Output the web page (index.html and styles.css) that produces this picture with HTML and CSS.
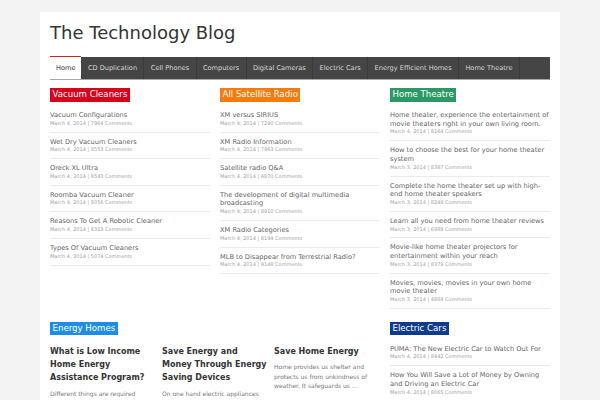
FILE: index.html
```html
<!DOCTYPE html>
<html>
<head>
<meta charset="utf-8">
<link rel="stylesheet" href="styles.css">
</head>
<body>
<div class="page">
  <h1 class="site-title">The Technology Blog</h1>
  <nav class="nav">
    <a class="nav-item active">Home</a>
    <a class="nav-item">CD Duplication</a>
    <a class="nav-item">Cell Phones</a>
    <a class="nav-item">Computers</a>
    <a class="nav-item">Digital Cameras</a>
    <a class="nav-item">Electric Cars</a>
    <a class="nav-item">Energy Efficient Homes</a>
    <a class="nav-item">Home Theatre</a>
  </nav>
  <main class="main">
    <section class="col">
      <h2 class="label red">Vacuum Cleaners</h2>
      <ul class="list">
        <li class="item"><div class="t">Vacuum Configurations</div><div class="m">March 4, 2014 | 7964 Comments</div></li>
        <li class="item"><div class="t">Wet Dry Vacuum Cleaners</div><div class="m">March 4, 2014 | 8553 Comments</div></li>
        <li class="item"><div class="t">Oreck XL Ultra</div><div class="m">March 4, 2014 | 8543 Comments</div></li>
        <li class="item"><div class="t">Roomba Vacuum Cleaner</div><div class="m">March 4, 2014 | 8056 Comments</div></li>
        <li class="item"><div class="t">Reasons To Get A Robotic Cleaner</div><div class="m">March 4, 2014 | 8313 Comments</div></li>
        <li class="item"><div class="t">Types Of Vacuum Cleaners</div><div class="m">March 4, 2014 | 5074 Comments</div></li>
      </ul>
    </section>
    <section class="col">
      <h2 class="label orange">All Satellite Radio</h2>
      <ul class="list">
        <li class="item"><div class="t">XM versus SIRIUS</div><div class="m">March 4, 2014 | 7290 Comments</div></li>
        <li class="item"><div class="t">XM Radio Information</div><div class="m">March 4, 2014 | 7963 Comments</div></li>
        <li class="item"><div class="t">Satellite radio Q&amp;A</div><div class="m">March 4, 2014 | 4870 Comments</div></li>
        <li class="item"><div class="t">The development of digital multimedia broadcasting</div><div class="m">March 4, 2014 | 8910 Comments</div></li>
        <li class="item"><div class="t">XM Radio Categories</div><div class="m">March 4, 2014 | 8194 Comments</div></li>
        <li class="item"><div class="t">MLB to Disappear from Terrestrial Radio?</div><div class="m">March 4, 2014 | 9148 Comments</div></li>
      </ul>
    </section>
    <section class="col">
      <h2 class="label green">Home Theatre</h2>
      <ul class="list">
        <li class="item"><div class="t">Home theater, experience the entertainment of movie theaters right in your own living room.</div><div class="m">March 4, 2014 | 8164 Comments</div></li>
        <li class="item"><div class="t">How to choose the best for your home theater system</div><div class="m">March 3, 2014 | 8387 Comments</div></li>
        <li class="item"><div class="t">Complete the home theater set up with high-end home theater speakers</div><div class="m">March 3, 2014 | 8249 Comments</div></li>
        <li class="item"><div class="t">Learn all you need from home theater reviews</div><div class="m">March 3, 2014 | 6989 Comments</div></li>
        <li class="item"><div class="t">Movie-like home theater projectors for entertainment within your reach</div><div class="m">March 3, 2014 | 8379 Comments</div></li>
        <li class="item"><div class="t">Movies, movies, movies in your own home movie theater</div><div class="m">March 3, 2014 | 4869 Comments</div></li>
      </ul>
    </section>
    <section class="col wide">
      <h2 class="label blue">Energy Homes</h2>
      <div class="posts">
        <article class="post">
          <h3 class="pt">What is Low Income Home Energy Assistance Program?</h3>
          <p class="px">Different things are required</p>
        </article>
        <article class="post">
          <h3 class="pt">Save Energy and Money Through Energy Saving Devices</h3>
          <p class="px">On one hand electric appliances</p>
        </article>
        <article class="post">
          <h3 class="pt">Save Home Energy</h3>
          <p class="px">Home provides us shelter and protects us from unkindness of weather. It safeguards us ...</p>
        </article>
      </div>
    </section>
    <section class="col">
      <h2 class="label navy">Electric Cars</h2>
      <ul class="list">
        <li class="item"><div class="t">PUMA: The New Electric Car to Watch Out For</div><div class="m">March 4, 2014 | 8442 Comments</div></li>
        <li class="item"><div class="t">How You Will Save a Lot of Money by Owning and Driving an Electric Car</div><div class="m">March 4, 2014 | 8065 Comments</div></li>
      </ul>
    </section>
  </main>
</div>
</body>
</html>
```

FILE: styles.css
```css
html, body {
  margin: 0;
  padding: 0;
  background: #f3f3f3;
  font-family: "DejaVu Sans", Verdana, sans-serif;
  overflow: hidden;
  height: 400px;
}
.page {
  width: 500px;
  margin: 12px auto 0;
  padding: 10px 10px 0;
  background: #fff;
  height: 400px;
}
.site-title {
  margin: 0;
  font-size: 18px;
  line-height: 21px;
  font-weight: normal;
  color: #333;
}
.nav {
  display: flex;
  margin-top: 14px;
  height: 22px;
  background: #454545;
  box-shadow: 0 1px 0 #a8a8a8;
}
.nav-item {
  display: flex;
  align-items: center;
  padding: 0 6.4px;
  font-size: 6.6px;
  color: #d8d8d8;
  border-right: 1px solid #3a3a3a;
  white-space: nowrap;
}
.nav-item.active {
  background: #fff;
  color: #333;
  margin-top: -1px;
  border-top: 1px solid #d42020;
  border-right: none;
  padding: 0 6px;
}
.main {
  display: grid;
  grid-template-columns: 160px 160px 160px;
  column-gap: 10px;
  row-gap: 12.5px;
  margin-top: 9px;
  align-items: start;
}
.col {
  display: flex;
  flex-direction: column;
  align-items: flex-start;
}
.col.wide {
  grid-column: span 2;
}
.label {
  margin: 0 0 4.5px;
  padding: 0 2.5px;
  font-size: 8.6px;
  line-height: 13.5px;
  font-weight: normal;
  color: #fff;
}
.red { background: #d9001c; }
.orange { background: #f57c0c; }
.green { background: #2b9966; }
.blue { background: #1d8ee8; }
.navy { background: #0f3b8c; }
.list {
  list-style: none;
  margin: 0;
  padding: 0;
  align-self: stretch;
}
.item {
  padding: 5px 0 4.6px;
  border-bottom: 1px solid #ebebeb;
}
.t {
  font-size: 6.65px;
  line-height: 8.7px;
  color: #5f5f5f;
}
.m {
  font-size: 5px;
  line-height: 7.3px;
  color: #a0a0a0;
}
.posts {
  display: grid;
  grid-template-columns: 106px 106px 106px;
  column-gap: 6px;
  padding-top: 5.5px;
  align-self: stretch;
}
.post {
  margin: 0;
}
.pt {
  margin: 0;
  font-size: 8px;
  line-height: 13.2px;
  font-weight: bold;
  color: #333;
}
.px {
  margin: 4px 0 0;
  font-size: 6px;
  line-height: 9.5px;
  color: #777;
}
```
